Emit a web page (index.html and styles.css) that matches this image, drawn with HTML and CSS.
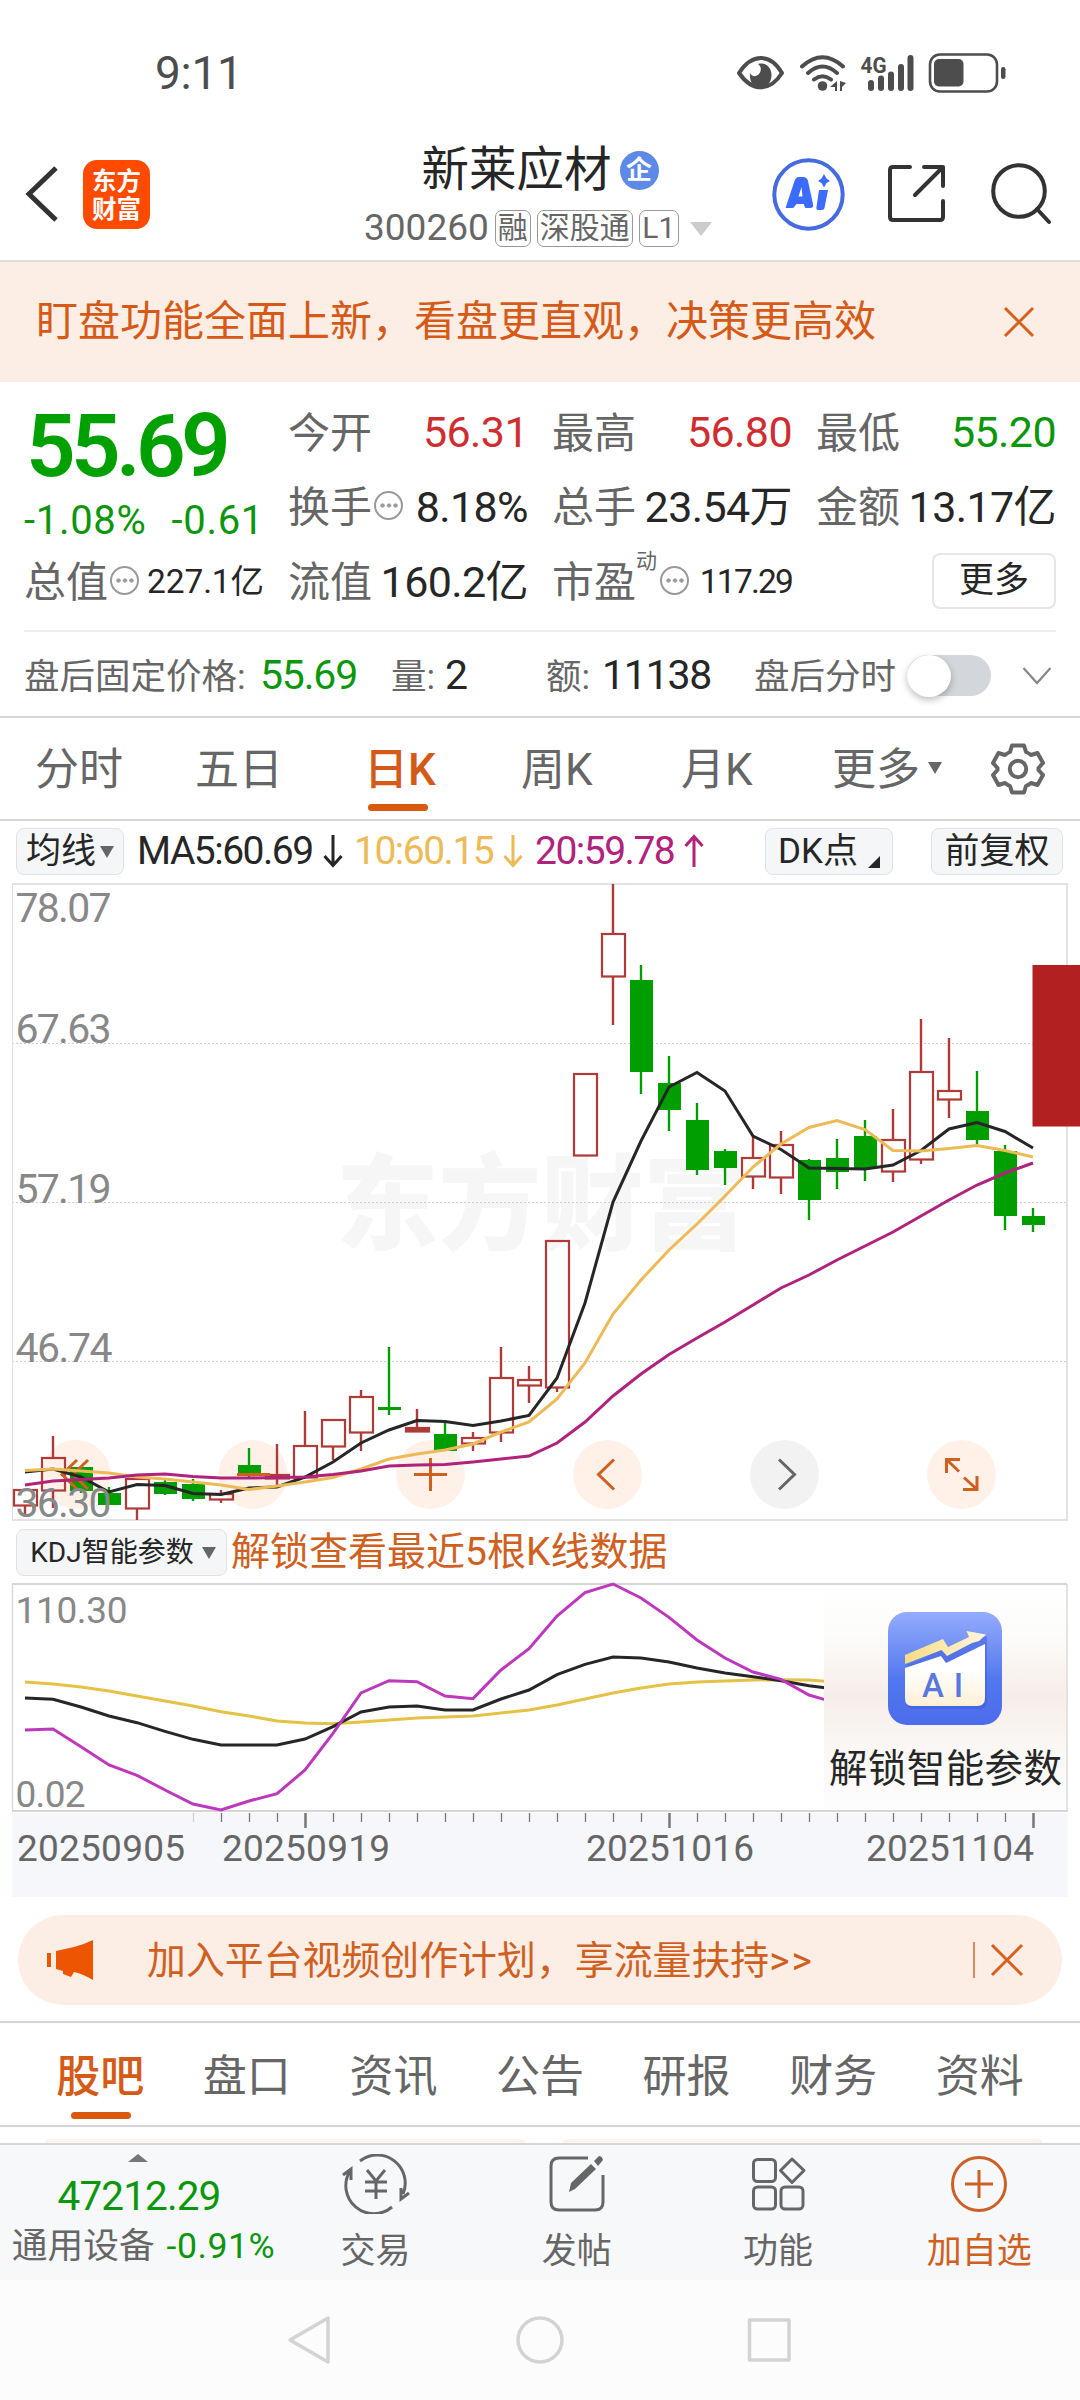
FILE: index.html
```
<!DOCTYPE html>
<html lang="zh-CN">
<head>
<meta charset="utf-8">
<meta name="viewport" content="width=1080">
<title>新莱应材 300260</title>
<link rel="stylesheet" href="styles.css">
</head>
<body>
<div class="status">
  <span class="clock">9:11</span>
  <svg class="status-icons" width="272" height="42" viewBox="736 53 272 42">
    <g fill="none" stroke="#4d4d4d" stroke-width="4">
      <path d="M739 73C752 53 770 53 782 73C770 92 752 92 739 73Z" stroke-linejoin="round"/>
      <path d="M802 66.500Q822.500 48 843 66.500M808 73Q822.500 60 837 73M814 79.500Q822.500 73 831 79.500" stroke-linecap="round"/>
      <path d="M871 83V88M881 78.500V88M891 74.500V88M901 67V88M910.500 58V88" stroke-width="6" stroke-linecap="round"/>
      <rect x="930" y="54.500" width="67" height="37" rx="10" stroke-width="2.600"/>
    </g>
    <g fill="#4d4d4d">
      <path d="M758 64C765 62 772 67 771.500 76C771 84 765 88 760 88C754 88 749 82 750 73C752 77 756 77 759 74C762 70 761 66 758 64Z"/>
      <circle cx="822.500" cy="86" r="4.800"/>
      <path d="M830 87l7-6v10h-2v-4zM840 81v10h2v-4l4-4z"/>
      <rect x="934" y="59" width="29.500" height="27.500" rx="5"/>
      <rect x="1001" y="67" width="4.500" height="12" rx="2.200"/>
      <text x="860.500" y="72.500" font-size="22" font-weight="700" textLength="26" lengthAdjust="spacingAndGlyphs">4G</text>
    </g>
  </svg>
</div>

<header class="header">
  <div class="header-left">
    <svg width="34" height="56" viewBox="0 0 34 56"><path d="M31 2L4 28L31 54" fill="none" stroke="#333" stroke-width="5"/></svg>
    <div class="logo"><span>东方</span><span>财富</span></div>
  </div>
  <div class="header-title">
    <div class="name">新莱应材<span class="ent">企</span></div>
    <div class="code">300260<span class="tag">融</span><span class="tag">深股通</span><span class="tag">L1</span><i class="tri"></i></div>
  </div>
  <div class="header-right">
    <svg width="73" height="73" viewBox="0 0 73 73"><circle cx="36.500" cy="36.500" r="34.200" fill="#fff" stroke="#456bdf" stroke-width="4"/><path d="M13.500 50L22 24.500Q23.500 19 27 19H31Q35 19 36 23L41 46Q42 50 38 50H34Q32.500 50 32 46H24.500L22.500 48.500Q22 50 20 50ZM26.500 38.500H30.500L29.500 29ZM47 32H56L52.500 50Q52 52 50 52H46Q44 52 44.500 49ZM52 16l2.500 4.500L58 23l-3.500 2L52 29.500 49.500 25 46 23l3.500-2.500z" fill="#3c6bff"/></svg>
    <svg class="share" width="60" height="60" viewBox="0 0 60 60"><path d="M23 3H6Q3 3 3 6V53Q3 56 6 56H53Q56 56 56 53V37M37 3H56V22M28 31L55 4" fill="none" stroke="#333" stroke-width="4" stroke-linecap="round" stroke-linejoin="round"/></svg>
    <svg class="search" width="62" height="62" viewBox="0 0 62 62"><circle cx="28" cy="28" r="25.800" fill="none" stroke="#333" stroke-width="4"/><path d="M46 46L58 59" stroke="#333" stroke-width="4" stroke-linecap="round"/></svg>
  </div>
</header>

<div class="banner">
  <span>盯盘功能全面上新，看盘更直观，决策更高效</span>
  <svg width="32" height="32" viewBox="0 0 32 32"><path d="M2 2L30 30M30 2L2 30" stroke="#d9601c" stroke-width="3"/></svg>
</div>

<section class="quote">
  <div class="price">
    <div class="last">55.69</div>
    <div class="delta"><span>-1.08%</span><span>-0.61</span></div>
  </div>
  <div class="cell"><span>今开</span><b class="up">56.31</b></div>
  <div class="cell"><span>最高</span><b class="up">56.80</b></div>
  <div class="cell"><span>最低</span><b class="down">55.20</b></div>
  <div class="cell"><span>换手</span><i class="info"></i><b>8.18%</b></div>
  <div class="cell"><span>总手</span><b>23.54万</b></div>
  <div class="cell"><span>金额</span><b>13.17亿</b></div>
  <div class="cell"><span>总值</span><i class="info"></i><b class="small">227.1亿</b></div>
  <div class="cell"><span>流值</span><b>160.2亿</b></div>
  <div class="cell"><span>市盈</span><sup>动</sup><i class="info"></i><b class="small tight">117.29</b></div>
  <div class="cell end"><button class="more">更多</button></div>
</section>

<section class="after">
  <span>盘后固定价格:</span><b class="down">55.69</b>
  <span>量:</span><b>2</b>
  <span>额:</span><b>11138</b>
  <span>盘后分时</span>
  <i class="toggle"></i>
  <svg width="30" height="20" viewBox="0 0 30 20"><path d="M1.500 2L15 17L28.500 2" fill="none" stroke="#888" stroke-width="2.200"/></svg>
</section>

<nav class="periods">
  <span>分时</span><span>五日</span><span class="on">日K</span><span>周K</span><span>月K</span>
  <span>更多<i class="tri dark"></i></span>
  <svg width="54" height="54" viewBox="-27 -27 54 54"><path d="M-6-23.500H6L8-17Q10.500-16 13-14L19.500-16L25-6L20.500-1V1L25 6L19.500 16L13 14Q10.500 16 8 17L6 23.500H-6L-8 17Q-10.500 16-13 14L-19.500 16L-25 6L-20.500 1V-1L-25-6L-19.500-16L-13-14Q-10.500-16-8-17Z" fill="none" stroke="#666" stroke-width="4" stroke-linejoin="round"/><circle r="8.200" fill="none" stroke="#666" stroke-width="4"/></svg>
</nav>

<div class="ma">
  <button class="chip">均线<i class="tri dark"></i></button>
  <span class="ma5">MA5:60.69<svg width="20" height="34" viewBox="0 0 20 34"><path d="M10 1V31M1.500 22L10 31.500L18.500 22"/></svg></span>
  <span class="ma10">10:60.15<svg width="20" height="34" viewBox="0 0 20 34"><path d="M10 1V31M1.500 22L10 31.500L18.500 22"/></svg></span>
  <span class="ma20">20:59.78<svg width="20" height="34" viewBox="0 0 20 34"><path d="M10 33V3M1.500 12L10 2.500L18.500 12"/></svg></span>
  <button class="chip dk">DK点<i class="corner"></i></button>
  <button class="chip fq">前复权</button>
</div>

<svg class="kline" width="1080" height="652" viewBox="0 876 1080 652">
  <text class="watermark" x="336" y="1242" textLength="410" lengthAdjust="spacingAndGlyphs">东方财富</text>
  <path d="M12 1043.500H1067M12 1202.500H1067M12 1361.500H1067" stroke="#cfcfcf" stroke-dasharray="2 2"/>
  <path d="M12.500 884V1520" stroke="#e0e0e0"/>
  <path d="M12 884H1067V1520H12" fill="none" stroke="#e2e2e2" stroke-width="2"/>
  <g fill="#fff0e8">
    <circle cx="76" cy="1474.500" r="34.400"/><circle cx="253" cy="1474.500" r="34.400"/><circle cx="430.500" cy="1474.500" r="34.400"/><circle cx="607.500" cy="1474.500" r="34.400"/><circle cx="961.500" cy="1474.500" r="34.400"/>
    <circle cx="784.500" cy="1474.500" r="34.400" fill="#f2f2f2"/>
  </g>
  <g id="candles"></g>
  <g fill="none" stroke="#d0601f" stroke-width="3">
    <path d="M77 1460L62 1474.500L77 1489M88 1460L73 1474.500L88 1489"/>
    <path d="M237 1474.500H270M414 1474.500H447M430.500 1458V1491"/>
    <path d="M614 1459.500L598.500 1474.500L614 1489.500"/>
    <path d="M779 1459.500L794.500 1474.500L779 1489.500" stroke="#666"/>
    <path d="M960 1459.500H946.500V1473M947 1460L959 1471.500M963 1489.500H977V1476M976.500 1489L964 1477.500"/>
  </g>
  <g id="averages" fill="none" stroke-width="3"></g>
  <g class="axis">
    <text x="15.500" y="922" textLength="96">78.07</text>
    <text x="15.500" y="1043" textLength="96">67.63</text>
    <text x="15.500" y="1203" textLength="96">57.19</text>
    <text x="15.500" y="1362" textLength="97">46.74</text>
    <text x="15.500" y="1517" textLength="96">36.30</text>
  </g>
  <rect x="1032.500" y="965" width="48" height="161.500" fill="#b32021"/>
</svg>

<div class="kdj-head">
  <button class="chip">KDJ智能参数<i class="tri dark"></i></button>
  <span>解锁查看最近5根K线数据</span>
</div>

<svg class="kdj" width="1080" height="322" viewBox="0 1577 1080 322">
  <defs>
    <linearGradient id="panel" x2="0" y2="1"><stop offset="0" stop-color="#fff"/><stop offset=".22" stop-color="#fdfcfb"/><stop offset=".5" stop-color="#f6ede8"/><stop offset=".68" stop-color="#f9f6f3"/><stop offset="1" stop-color="#fefefe"/></linearGradient>
    <linearGradient id="tile" x2="0" y2="1"><stop offset="0" stop-color="#94acfd"/><stop offset=".6" stop-color="#5277ee"/><stop offset="1" stop-color="#4c6cec"/></linearGradient>
    <linearGradient id="gold"><stop offset="0" stop-color="#f8dc83"/><stop offset="1" stop-color="#fff6dc"/></linearGradient>
    <linearGradient id="cream" x2="0" y2="1"><stop offset=".4" stop-color="#fff"/><stop offset="1" stop-color="#fff0d6"/></linearGradient>
  </defs>
  <rect x="12" y="1813" width="1056" height="84" fill="#f6f7fa"/>
  <path d="M12.500 1584V1811M1067 1584V1811" stroke="#dadada" stroke-width="1.500"/>
  <path d="M12 1584H1067M12 1811H1068" stroke="#d6d6d6" stroke-width="2"/>
  <g id="ticks" fill="none" stroke="#777"></g>
  <g id="kdj-lines" fill="none" stroke-width="3"></g>
  <rect x="824" y="1585" width="242" height="225" fill="url(#panel)"/>
  <rect x="888" y="1612" width="114" height="113" rx="19" fill="url(#tile)"/>
  <path d="M905 1662L943.500 1645L947.500 1650L985 1633V1697Q985 1706 977 1706H912Q905 1706 905 1698Z" fill="#3c5cd8" opacity=".5" transform="translate(2 3)"/>
  <path d="M905 1668L941 1656L946 1663L985 1644V1698Q985 1706 977 1706H912Q905 1706 905 1698Z" fill="url(#cream)"/>
  <path d="M905 1655L943 1639L948 1647L969 1637L966.500 1631L986 1634.500L979 1641L972 1643L947 1656L941.500 1650L905 1664Z" fill="url(#gold)"/>
  <text x="922" y="1697" font-size="33" font-weight="500" fill="#5878df" textLength="41">AI</text>
  <text x="829" y="1782" font-size="38.500" fill="#262626" textLength="233">解锁智能参数</text>
  <g class="axis kdj-axis">
    <text x="15.500" y="1622.500" textLength="112">110.30</text>
    <text x="15.500" y="1807" textLength="70">0.02</text>
  </g>
  <g class="dates">
    <text x="17" y="1861" textLength="168">20250905</text>
    <text x="222" y="1861" textLength="168">20250919</text>
    <text x="586" y="1861" textLength="168">20251016</text>
    <text x="866" y="1861" textLength="168">20251104</text>
  </g>
</svg>

<div class="promo">
  <svg width="47" height="42" viewBox="0 0 47 42"><path d="M0 14H4V28H0zM9 12L27 8Q38 5 46 1V41Q36 35 27 33L24 38 16 35V32L9 30Z" fill="#ee5500"/></svg>
  <span>加入平台视频创作计划，享流量扶持<em>&gt;&gt;</em></span>
  <i class="bar"></i>
  <svg width="34" height="34" viewBox="0 0 34 34"><path d="M2 2L32 32M32 2L2 32" stroke="#d9601c" stroke-width="3"/></svg>
</div>

<nav class="sections">
  <span class="on">股吧</span><span>盘口</span><span>资讯</span><span>公告</span><span>研报</span><span>财务</span><span>资料</span>
</nav>
<div class="peek"><i></i><i></i></div>

<footer class="toolbar">
  <div class="sector">
    <i class="tri up-tri"></i>
    <b>47212.29</b>
    <div>通用设备<em>-0.91%</em></div>
  </div>
  <div class="tool">
    <svg width="68" height="60" viewBox="-34 -30 68 60"><g fill="none" stroke="#666" stroke-width="3"><path d="M-16-23A28 28 0 0 1 27 10M16 23A28 28 0 0 1-26-13M-33-9L-25-15L-25-4M33 9L25 15L25 4"/><path d="M-9-14L0-3L9-14M0-3V15M-11-2H11M-11 7H11"/></g></svg>
    <span>交易</span>
  </div>
  <div class="tool">
    <svg width="58" height="60" viewBox="-29 -30 58 60"><path d="M11-26H-18Q-26-26-26-18V18Q-26 26-18 26H18Q26 26 26 18V-9" fill="none" stroke="#666" stroke-width="3"/><path d="M-8 8L-6-1L14-20L19-15L-2 5ZM17-23L22-28Q25-28 26-24L21-18Z" fill="#666"/></svg>
    <span>发帖</span>
  </div>
  <div class="tool">
    <svg width="58" height="60" viewBox="-29 -30 58 60"><g fill="none" stroke="#666" stroke-width="3"><rect x="-24.500" y="-24.500" width="22" height="22" rx="4"/><rect x="-24.500" y="3" width="22" height="22" rx="4"/><rect x="3" y="3" width="22" height="22" rx="4"/><path d="M14-25L26-13.500L14-1.500L2.500-13.500Z" stroke-linejoin="round"/></g></svg>
    <span>功能</span>
  </div>
  <div class="tool hot">
    <svg width="60" height="60" viewBox="-30 -30 60 60"><circle r="26.500" fill="none" stroke="#cd6024" stroke-width="3"/><path d="M-14 0H14M0-14V14" stroke="#cd6024" stroke-width="3"/></svg>
    <span>加自选</span>
  </div>
</footer>
<div class="sysnav">
  <svg width="520" height="52" viewBox="280 2314 520 52"><g fill="none" stroke="#d3d3d3" stroke-width="3.500" stroke-linejoin="round"><path d="M328 2318V2362L290 2340Z"/><circle cx="540" cy="2340" r="22"/><rect x="749.500" y="2320" width="39.500" height="40"/></g></svg>
</div>
<script src="chart.js"></script>
</body>
</html>
```
FILE: styles.css
```
* { box-sizing: border-box; }
body {
  margin: 0;
  width: 1080px;
  height: 2400px;
  overflow: hidden;
  background: #fff;
  color: #262626;
  font-family: Roboto, "Noto Sans CJK SC", sans-serif;
  line-height: 1.2;
}
svg { display: block; flex: none; }
b { font-weight: 400; }
i, em { font-style: normal; }
button { font: inherit; color: inherit; padding: 0; white-space: nowrap; }
.up { color: #cf2d30; }
.down { color: #0c960c; }
.tri {
  display: inline-block;
  border: 11px solid transparent;
  border-top: 14px solid #ccc;
  border-bottom: 0;
}
.tri.dark { border-width: 12px 7.5px 0; border-top-color: #666; }

.status {
  height: 140px;
  padding: 8px 72px 0 155px;
  display: flex;
  align-items: center;
  justify-content: space-between;
}
.clock { font-size: 46px; color: #4d4d4d; letter-spacing: -0.3px; }

.header {
  height: 122px;
  padding: 0 27px 12px 25px;
  border-bottom: 2px solid #ddd;
  display: grid;
  grid-template-columns: 339px 350px 1fr;
  align-items: center;
}
.header-left { display: flex; align-items: center; gap: 24px; }
.logo {
  width: 67px;
  height: 69px;
  border-radius: 14px;
  background: #ff4a00;
  color: #fff;
  font: 700 24.5px/28px "Noto Sans CJK SC", sans-serif;
  display: flex;
  flex-direction: column;
  align-items: center;
  justify-content: center;
}
.name {
  height: 58px;
  display: flex;
  align-items: center;
  justify-content: center;
  padding-left: 2px;
  font-size: 47.5px;
  line-height: 58px;
}
.ent {
  width: 39px;
  height: 39px;
  margin-left: 8px;
  border-radius: 50%;
  background: #5c8ae6;
  color: #fff;
  font-size: 26px;
  font-weight: 700;
  line-height: 38px;
  text-align: center;
}
.code {
  height: 37px;
  margin-top: 11px;
  display: flex;
  align-items: center;
  color: #666;
  font-size: 37px;
}
.tag {
  height: 37px;
  margin-left: 6px;
  padding: 0 2px;
  border: 1.5px solid #999;
  border-radius: 7px;
  font-size: 30px;
  line-height: 34px;
}
.tag:last-of-type { width: 40px; text-align: center; }
.code .tri { margin-left: 11px; }
.header-right { display: flex; align-items: center; justify-content: flex-end; }
.share { margin-left: 42px; }
.search { margin-left: 44px; }

.banner {
  height: 120px;
  padding: 0 45px 0 36px;
  background: #fceee5;
  color: #d65a17;
  display: flex;
  align-items: center;
  justify-content: space-between;
  font-size: 42px;
}

.quote {
  height: 250px;
  margin: 0 24px;
  padding: 14px 0 0;
  border-bottom: 2px solid #eee;
  display: grid;
  grid-template-columns: 240px 240px 240px 240px;
  grid-template-rows: 74px 75px 75px;
  column-gap: 24px;
}
.price { grid-row: 1 / 3; color: #00a000; }
.last {
  margin: 10px 0 0 2px;
  font-size: 87px;
  font-weight: 600;
  line-height: 80px;
  letter-spacing: -4.7px;
}
.delta {
  margin-top: 12px;
  display: flex;
  justify-content: space-between;
  color: #0c960c;
  font-size: 40px;
  line-height: 46px;
  letter-spacing: 0.7px;
}
.cell { display: flex; align-items: center; font-size: 42px; color: #666; white-space: nowrap; }
.cell > span { padding-top: 2px; }
.cell b { margin-left: auto; font-size: 43px; letter-spacing: -0.6px; color: #262626; }
.cell b.up { color: #cf2d30; }
.cell b.down { color: #0c960c; }
.cell b.small { font-size: 33.5px; letter-spacing: -0.1px; }
.cell b.tight { letter-spacing: -1.8px; }
.cell sup { width: 22px; font-size: 21px; line-height: 24px; align-self: flex-start; margin-top: 4px; }
.cell.end { justify-content: flex-end; }
.info {
  width: 29px;
  height: 29px;
  margin: 0 0 4px 2px;
  border: 2px solid #999;
  border-radius: 50%;
  background: radial-gradient(circle, #999 1.8px, transparent 2.4px) center / 6.5px 25px repeat-x content-box;
  padding: 0 2.5px;
}
.more {
  width: 124px;
  height: 56px;
  margin-bottom: 3px;
  border: 2px solid #e6e6e6;
  border-radius: 8px;
  background: #fff;
  color: #262626;
  font-size: 35px;
  line-height: 48px;
}

.after {
  height: 86px;
  padding: 3px 0 0 24px;
  border-bottom: 2px solid #d6d6d6;
  display: grid;
  grid-template-columns: 236px 131px 54px 101px 56px 152px 153px 115px auto;
  align-items: center;
  color: #666;
  font-size: 35.5px;
  white-space: nowrap;
}
.after span { padding-top: 3px; }
.after b { font-size: 41px; letter-spacing: -1.2px; }
.after b:not(.down) { color: #262626; }
.toggle {
  width: 84px;
  height: 41px;
  border-radius: 21px;
  background: #d3d6db;
}
.toggle::before {
  content: "";
  display: block;
  width: 44px;
  height: 42px;
  border-radius: 50%;
  background: #fff;
  box-shadow: 0 3px 7px rgba(0, 0, 0, .25);
}

.periods {
  height: 103px;
  padding-left: 35px;
  border-bottom: 2px solid #d6d6d6;
  display: grid;
  grid-template-columns: 160px 169px 157px 160px 151px 159px auto;
  align-items: center;
  color: #666;
  font-size: 44px;
}
.periods span, .sections span { position: relative; white-space: nowrap; }
.periods span { padding-top: 3px; }
.periods .on, .sections .on { color: #d65a17; font-weight: 500; }
.periods .on::after, .sections .on::after {
  content: "";
  position: absolute;
  left: 4px;
  bottom: -15px;
  width: 60px;
  height: 7px;
  border-radius: 4px;
  background: #d9590f;
}
.periods .tri { margin-left: 8px; vertical-align: 11px; }

.ma {
  height: 55px;
  padding: 6px 0 0 16px;
  display: grid;
  grid-template-columns: 121px 217px 181px 230px 166px 132px;
  align-items: center;
  font-size: 39px;
  letter-spacing: -1.5px;
  white-space: nowrap;
}
.ma span { display: flex; align-items: center; gap: 10px; }
.ma span svg { fill: none; stroke: currentColor; stroke-width: 3; }
.ma10 { color: #ecbb57; }
.ma20 { color: #b0227c; }
.chip {
  height: 47px;
  border: 1.5px solid #dfe2e6;
  border-radius: 8px;
  background: #f5f6f8;
  font-size: 35px;
  line-height: 42px;
  letter-spacing: 0;
  display: flex;
  align-items: center;
  justify-content: center;
}
.ma > .chip:first-child { width: 108px; }
.chip .tri { margin-left: 4px; }
.chip.dk { width: 128px; justify-content: flex-start; padding-left: 12px; }
.corner {
  align-self: flex-end;
  margin: 0 0 6px 10px;
  border: 6px solid transparent;
  border-right-color: #262626;
  border-bottom-color: #262626;
}

.kline text, .kdj text { white-space: pre; }
.watermark { font: 900 104px "Noto Sans CJK SC", sans-serif; fill: #f6f6f6; }
.axis { font-size: 41px; fill: #888; }
.kdj-axis { font-size: 37px; }
.dates { font-size: 37px; fill: #666; }

.kdj-head {
  height: 49px;
  padding: 0 0 0 16px;
  display: flex;
  align-items: center;
  color: #d0601f;
  font-size: 39px;
  white-space: nowrap;
}
.kdj-head .chip { width: 211px; margin-right: 4px; padding-left: 3px; color: #262626; font-size: 28px; }
.kdj-head .tri { margin-left: 8px; }

.promo {
  height: 90px;
  margin: 16px 18px 0;
  padding: 0 38px 0 29px;
  border-radius: 45px;
  background: #fceee5;
  color: #d0601f;
  display: flex;
  align-items: center;
  font-size: 38.9px;
}
.promo span { margin-left: 53px; padding-top: 2px; white-space: nowrap; }
.promo em { letter-spacing: 2px; }
.bar { width: 2px; height: 36px; margin: 0 15px 0 auto; background: #d98a5e; }

.sections {
  height: 106px;
  margin-top: 16px;
  padding: 7px 27px 0;
  border-top: 2px solid #d6d6d6;
  border-bottom: 2px solid #d6d6d6;
  display: grid;
  grid-template-columns: repeat(7, 1fr);
  align-items: center;
  text-align: center;
  color: #666;
  font-size: 44px;
}
.sections .on::after { left: 44px; bottom: -15px; }
.peek {
  height: 16px;
  padding: 12px 38px 0 45px;
  display: grid;
  grid-template-columns: 1fr 1fr;
  gap: 38px;
}
.peek i { background: #fdf3ee; border-radius: 12px 12px 0 0; }

.toolbar {
  height: 137px;
  border-top: 2px solid #d6d6d6;
  background: #f6f8fa;
  display: grid;
  grid-template-columns: 275px repeat(4, 201.25px);
  color: #666;
}
.sector { display: flex; flex-direction: column; align-items: center; padding-top: 9px; }
.sector .up-tri { border-width: 0 10px 8px; border-bottom: 8px solid #777; }
.sector b { margin: 9px 0 0 3px; font-size: 40.5px; line-height: 50px; color: #0c960c; letter-spacing: -0.9px; }
.sector div { margin-left: 12px; font-size: 35.7px; line-height: 50px; white-space: nowrap; }
.sector em { margin-left: 12px; color: #0c960c; letter-spacing: 0.5px; }
.tool {
  padding-top: 9px;
  display: flex;
  flex-direction: column;
  align-items: center;
  font-size: 35px;
}
.tool span { margin-top: 12px; line-height: 52px; }
.tool.hot { color: #d0601f; }
.sysnav {
  height: 120px;
  padding-top: 34px;
  background: #fcfcfc;
  display: flex;
  justify-content: center;
}
```
FILE: chart.js
```
const NS = "http://www.w3.org/2000/svg";
const RED = "#b03a38", GREEN = "#009e00";

function add(parent, tag, attrs) {
  const node = document.createElementNS(NS, tag);
  for (const key in attrs) node.setAttribute(key, attrs[key]);
  parent.appendChild(node);
}

// direction (1 = up), high, body top, body bottom, low; one entry per trading day
const days = [
  [1,1489,1490,1506,1517],[1,1436,1458,1491,1508],[0,1467,1467,1491,1493],[0,1487,1493,1505,1505],
  [1,1479,1479,1509,1520],[0,1480,1482,1494,1495],[0,1479,1484,1499,1501],[1,1490,1494,1500,1503],
  [0,1448,1465,1475,1477],[1,1444,1475,1479,1485],[1,1411,1446,1478,1478],[1,1420,1420,1447,1460],
  [1,1390,1397,1433,1451],[0,1347,1407,1410,1415],[1,1409,1428,1432,1432],[0,1422,1434,1451,1451],
  [1,1432,1438,1444,1451],[1,1347,1378,1433,1442],[1,1366,1380,1386,1403],[1,1241,1241,1388,1392],
  [1,1074,1074,1156,1156],[1,884,934,977,1025],[0,965,980,1072,1094],[0,1056,1083,1110,1131],
  [0,1103,1120,1170,1175],[0,1149,1151,1168,1185],[1,1137,1158,1177,1189],[1,1131,1145,1178,1194],
  [0,1159,1160,1200,1220],[0,1139,1158,1172,1189],[0,1120,1136,1169,1181],[1,1109,1140,1172,1182],
  [1,1019,1072,1160,1164],[1,1038,1091,1100,1118],[0,1071,1111,1140,1144],[0,1145,1151,1216,1230],
  [0,1208,1216,1225,1232]
];
const candles = document.getElementById("candles");
days.forEach(([up, high, top, bottom, low], i) => {
  const x = 25 + 28 * i;
  const color = up ? RED : GREEN;
  if (up) {
    add(candles, "path", { d: `M${x} ${high}V${top}M${x} ${bottom}V${low}`, stroke: color, "stroke-width": 2.4 });
    add(candles, "rect", { x: x - 11, y: top, width: 23, height: bottom - top - 0.5, fill: bottom - top < 5 ? color : "none", stroke: color, "stroke-width": 2.2 });
  } else {
    add(candles, "path", { d: `M${x} ${high}V${low}`, stroke: color, "stroke-width": 2.4 });
    add(candles, "rect", { x: x - 11, y: top, width: 23, height: bottom - top, fill: color });
  }
});

function line(parent, color, values, map, endX) {
  const last = values.length - 1;
  const points = values.map((v, i) => `${i === last && endX ? endX : 25 + 28 * i},${map(v)}`);
  add(parent, "polyline", { points: points.join(" "), stroke: color });
}
const same = v => v;
const averages = document.getElementById("averages");
line(averages, "#262626", [1472,1469,1477,1492,1484.5,1485.5,1493.5,1494.5,1488,1487,1477,1462,1443,1430,1420.5,1421.5,1425.5,1421,1415.5,1378,1303,1202,1141,1087,1072.5,1091,1136,1149.5,1168,1168.5,1169,1165,1150.5,1129,1122.5,1131.5,1148], same);
line(averages, "#ecbb57", [1470.5,1469,1471,1473,1477,1479,1482,1485,1489.5,1486,1482,1477.5,1469,1459,1454,1450,1444,1432,1422,1399,1363,1314,1280,1250,1224,1196,1167,1144,1127.5,1120.5,1129.5,1150.5,1151,1148.5,1145.5,1150.5,1157], same);
line(averages, "#b0227c", [1485,1481,1479.5,1478,1475,1474,1476.5,1478,1478,1477.5,1477,1474.5,1471,1466,1465,1464.5,1462,1459,1456,1443,1422,1396,1374,1354.5,1338,1322,1305,1288,1275,1260,1246,1232,1216,1200,1185,1173,1163], same);

const kdj = document.getElementById("kdj-lines");
const third = v => 1570 + v / 3;
line(kdj, "#e3c245", [336,342,351,363,378,393,408,425,438,453,459,461,456,450,444,441,438,429,420,405,387,369,354,342,336,333,330,329,330,334], third, 825);
line(kdj, "#262626", [384,388,411,438,458,484,508,525,525,525,507,470,426,411,408,420,420,387,360,314,283,261,264,276,294,309,320,332,347,353], third, 825);
line(kdj, "#bd38bd", [480,477,530,585,616,660,702,720,693,671,600,490,369,332,335,378,386,300,236,138,68,42,84,142,210,264,306,328,375,389], third, 825);

const ticks = document.getElementById("ticks");
for (let i = 6; i <= 36; i++) {
  const major = i === 10 || i === 23 || i === 36;
  add(ticks, "path", { d: `M${25.5 + 28 * i} 1813V${major ? 1828 : 1822}`, "stroke-width": major ? 2.5 : 1.3, opacity: i === 6 ? 0.3 : 1 });
}
```
